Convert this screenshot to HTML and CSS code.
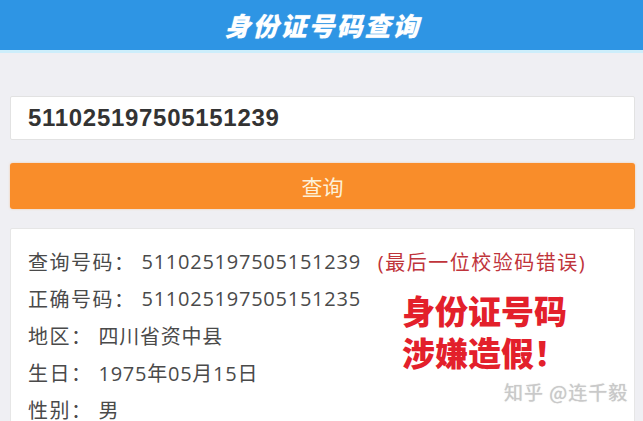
FILE: index.html
```html
<!DOCTYPE html>
<html lang="zh-CN">
<head>
<meta charset="utf-8">
<title>身份证号码查询</title>
<link rel="stylesheet" href="styles.css">
</head>
<body>
<header class="topbar"><h1 class="title">身份证号码查询</h1></header>
<main class="main">
  <input class="id-input" type="text" value="511025197505151239">
  <button class="query-btn" type="button">查询</button>
  <section class="card">
    <div class="row"><span class="label">查询号码：</span><span class="value">511025197505151239</span><span class="warn">(最后一位校验码错误)</span></div>
    <div class="row"><span class="label">正确号码：</span><span class="value">511025197505151235</span></div>
    <div class="row"><span class="label">地区：</span><span class="value">四川省资中县</span></div>
    <div class="row"><span class="label">生日：</span><span class="value">1975年05月15日</span></div>
    <div class="row"><span class="label">性别：</span><span class="value">男</span></div>
    <div class="stamp"><div class="stamp-line">身份证号码</div><div class="stamp-line">涉嫌造假！</div></div>
    <div class="watermark">知乎 @连千毅</div>
  </section>
</main>
</body>
</html>
```
FILE: styles.css
```css
* { box-sizing: border-box; }
html, body { margin: 0; padding: 0; }
body {
  background: #efeff3;
  font-family: "Open Sans", "Noto Sans CJK SC", sans-serif;
  width: 643px;
  height: 421px;
  overflow: hidden;
}
.topbar {
  height: 53px;
  background: #2e95e4;
  border-bottom: 3px solid #cdeefb;
  display: flex;
  align-items: center;
  justify-content: center;
}
.title {
  margin: 0;
  color: #ffffff;
  font-family: "Noto Sans CJK SC", sans-serif;
  font-weight: 900;
  font-size: 26px;
  letter-spacing: 2px;
  line-height: 1;
  font-style: italic;
  padding-left: 2px;
  text-shadow: 0 0 1px rgba(255,255,255,0.6);
}
.main {
  padding: 43px 8px 0 10px;
  display: flex;
  flex-direction: column;
}
.id-input {
  height: 44px;
  width: 100%;
  border: 1px solid #e2e2e2;
  border-radius: 2px;
  background: #fff;
  padding: 0 0 0 17px;
  font-family: "Liberation Sans", Arial, sans-serif;
  font-weight: bold;
  font-size: 24px;
  letter-spacing: 0.7px;
  color: #333;
  outline: none;
}
.query-btn {
  margin-top: 23px;
  height: 46px;
  width: 100%;
  border: none;
  border-radius: 3px;
  background: #f98d2a;
  box-shadow: 0 0 2px rgba(250,150,60,0.5);
  color: #fdf1d8;
  font-family: "Noto Sans CJK SC", sans-serif;
  font-size: 21px;
  padding: 0;
}
.card {
  position: relative;
  margin-top: 19px;
  background: #fff;
  border: 1px solid #e6e6e6;
  border-radius: 2px;
  padding: 14px 0 0 17px;
  height: 230px;
  display: flex;
  flex-direction: column;
  align-items: flex-start;
}
.row {
  display: flex;
  align-items: center;
  height: 37px;
  font-size: 20px;
  color: #4a4a4a;
  white-space: nowrap;
}
.label { margin-right: 6px; letter-spacing: 1.5px; }
.value { letter-spacing: 0.75px; }
.warn {
  color: #bf343b;
  letter-spacing: 1.5px;
  margin-left: 17px;
}
.stamp {
  position: absolute;
  left: 391px;
  top: 60px;
  display: flex;
  flex-direction: column;
  color: #e3202b;
  font-family: "Noto Sans CJK SC", sans-serif;
  font-weight: 900;
  font-size: 33px;
}
.stamp-line {
  height: 42px;
  line-height: 42px;
  white-space: nowrap;
}
.watermark {
  position: absolute;
  left: 493px;
  top: 149px;
  color: #c9c9c9;
  font-family: "Noto Sans CJK SC", sans-serif;
  font-size: 19px;
  letter-spacing: 1px;
  text-shadow: 0 0 1px rgba(150,150,150,0.5);
  white-space: nowrap;
}
```
